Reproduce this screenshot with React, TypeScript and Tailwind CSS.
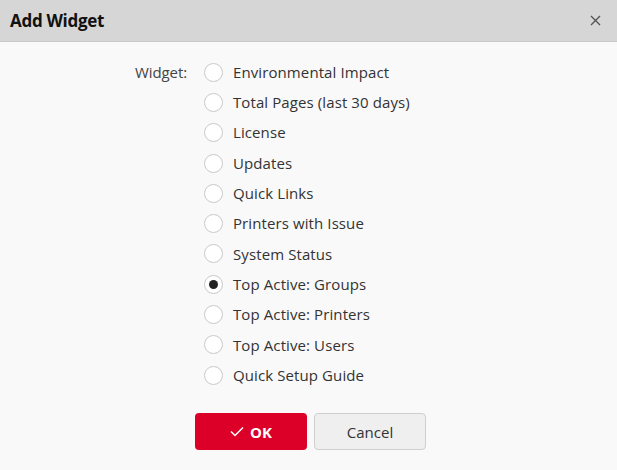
import React, { useState } from 'react';

const widgets = [
  'Environmental Impact',
  'Total Pages (last 30 days)',
  'License',
  'Updates',
  'Quick Links',
  'Printers with Issue',
  'System Status',
  'Top Active: Groups',
  'Top Active: Printers',
  'Top Active: Users',
  'Quick Setup Guide',
];

function App() {
  const [selected, setSelected] = useState('Top Active: Groups');

  return (
    <div className="w-[617px] h-[470px] bg-[#f9f9f9] flex flex-col font-['Open_Sans',sans-serif] text-[#333]">
      <div className="h-[42px] shrink-0 bg-[#d6d6d6] border-b border-[#c8c8c8] flex items-center justify-between pl-[10px] pr-[16px]">
        <h1 className="text-[17px] font-bold text-[#111] tracking-[-0.3px]">Add Widget</h1>
        <svg width="11" height="11" viewBox="0 0 11 11" className="text-[#555]">
          <path d="M1 1L10 10M10 1L1 10" stroke="currentColor" strokeWidth="1.4" />
        </svg>
      </div>

      <div className="flex-1 flex flex-col pt-[15px]">
        <div className="flex gap-[13px] pl-[135px]">
          <div className="w-[56px] text-[15px] leading-[30px] text-[#444] tracking-[-0.1px]">Widget:</div>
          <div className="flex flex-col">
            {widgets.map((w) => (
              <label key={w} className="h-[30.3px] flex items-center gap-[10px] cursor-pointer" onClick={() => setSelected(w)}>
                <span className="w-[19px] h-[19px] rounded-full border border-[#c9c9c9] bg-white flex items-center justify-center">
                  {selected === w && <span className="w-[9px] h-[9px] rounded-full bg-[#222]" />}
                </span>
                <span className="text-[15px] text-[#333] tracking-[0.1px]">{w}</span>
              </label>
            ))}
          </div>
        </div>

        <div className="flex gap-[7px] mt-[23px] pl-[195px]">
          <button className="w-[112px] h-[37px] rounded-[4px] bg-[#dc0028] text-white font-bold text-[15px] flex items-center justify-center gap-[6px]">
            <svg width="14" height="11" viewBox="0 0 14 11">
              <path d="M1 5.5L5 9.5L13 1.5" stroke="white" strokeWidth="1.5" fill="none" />
            </svg>
            OK
          </button>
          <button className="w-[112px] h-[37px] rounded-[4px] bg-[#efefef] border border-[#cfcfcf] text-[#333] text-[15px]">
            Cancel
          </button>
        </div>
      </div>
    </div>
  );
}

export default App;
